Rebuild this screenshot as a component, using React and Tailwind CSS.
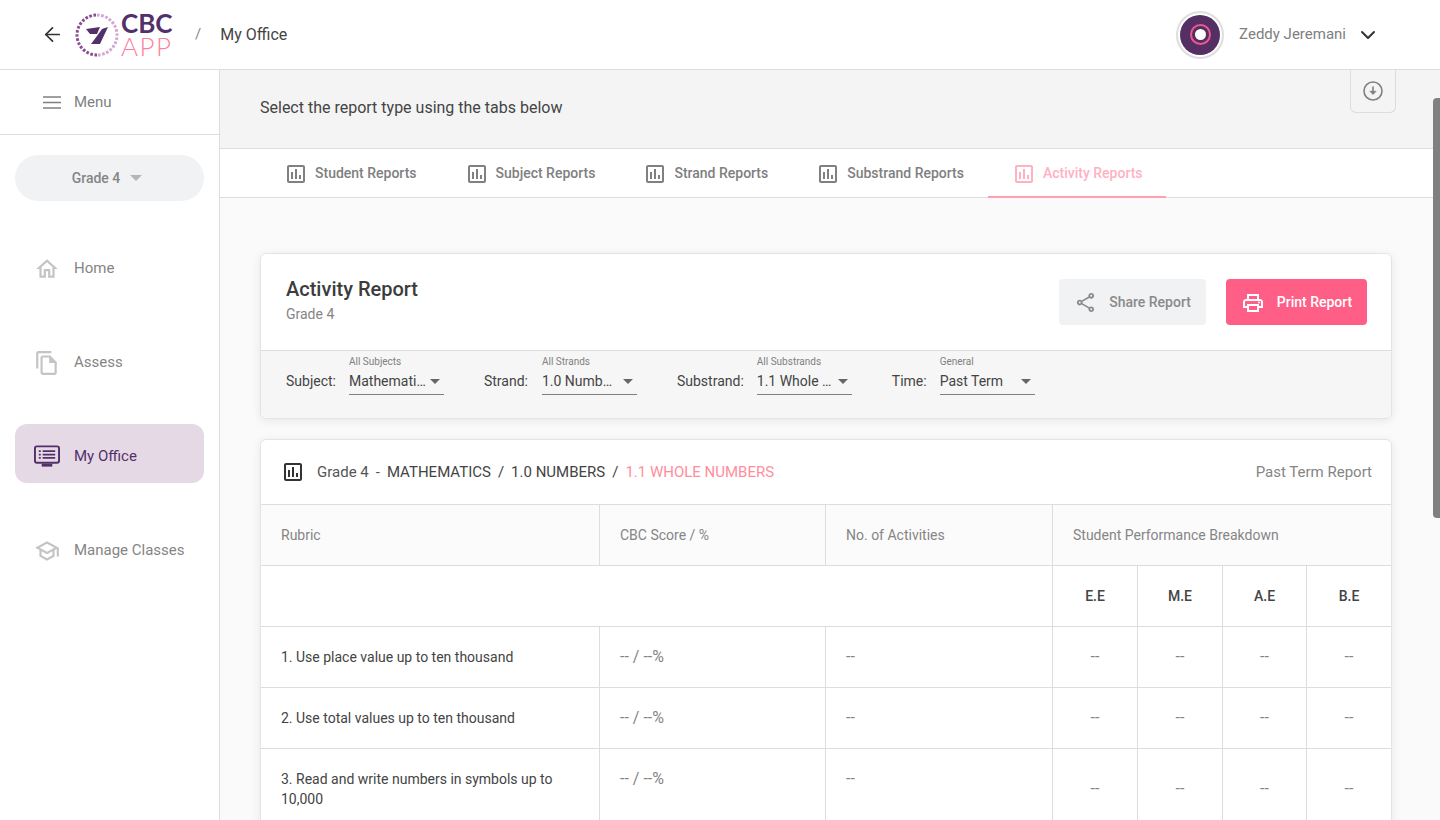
import React from 'react'
import { ArrowLeft, ChevronDown } from 'lucide-react'

const FONT = { fontFamily: 'Roboto, "Liberation Sans", sans-serif' }

const TABS = ['Student Reports', 'Subject Reports', 'Strand Reports', 'Substrand Reports', 'Activity Reports']

const FILTERS = [
  { label: 'Subject:', hint: 'All Subjects', value: 'Mathemati…', gap: 'ml-[13px]' },
  { label: 'Strand:', hint: 'All Strands', value: '1.0 Numb…', gap: 'ml-[14px]' },
  { label: 'Substrand:', hint: 'All Substrands', value: '1.1 Whole …', gap: 'ml-[13px]' },
  { label: 'Time:', hint: 'General', value: 'Past Term', gap: 'ml-[13px]' }
]

const ROWS = [
  { name: '1. Use place value up to ten thousand' },
  { name: '2. Use total values up to ten thousand' },
  { name: '3. Read and write numbers in symbols up to 10,000' }
]

const GRADES = ['E.E', 'M.E', 'A.E', 'B.E']

function MaterialIcon({ d, size = 24, className = '' }) {
  return (
    <svg width={size} height={size} viewBox="0 0 24 24" fill="currentColor" className={className}>
      <path d={d} />
    </svg>
  )
}

const ICON_CHART = 'M9 17H7v-7h2v7zm4 0h-2V7h2v10zm4 0h-2v-4h2v4zm2 2H5V5h14v14.1zM19 3H5c-1.1 0-2 .9-2 2v14c0 1.1.9 2 2 2h14c1.1 0 2-.9 2-2V5c0-1.1-.9-2-2-2z'
const ICON_HOME = 'M12 5.69l5 4.5V18h-2v-6H9v6H7v-7.81l5-4.5M12 3L2 12h3v8h6v-6h2v6h6v-8h3L12 3z'
const ICON_COPY = 'M16 1H4c-1.1 0-2 .9-2 2v14h2V3h12V1zm-1 4H8c-1.1 0-1.99.9-1.99 2L6 21c0 1.1.89 2 1.99 2H19c1.1 0 2-.9 2-2V11l-6-6zM8 21V7h6v5h5v9H8z'
const ICON_SCHOOL = 'M12 3L1 9l4 2.18v6L12 21l7-3.82v-6l2-1.09V17h2V9L12 3zm6.82 6L12 12.72 5.18 9 12 5.28 18.82 9zM17 15.99l-5 2.73-5-2.73v-3.72L12 15l5-2.73v3.72z'
const ICON_SHARE = 'M18 16.08c-.76 0-1.44.3-1.96.77L8.91 12.7c.05-.23.09-.46.09-.7s-.04-.47-.09-.7l7.05-4.11c.54.5 1.25.81 2.04.81 1.66 0 3-1.34 3-3s-1.34-3-3-3-3 1.34-3 3c0 .24.04.47.09.7L8.04 9.81C7.5 9.31 6.79 9 6 9c-1.66 0-3 1.34-3 3s1.34 3 3 3c.79 0 1.5-.31 2.04-.81l7.12 4.16c-.05.21-.08.43-.08.65 0 1.61 1.31 2.92 2.92 2.92s2.92-1.31 2.92-2.92-1.31-2.92-2.92-2.92zM18 4c.55 0 1 .45 1 1s-.45 1-1 1-1-.45-1-1 .45-1 1-1zM6 13c-.55 0-1-.45-1-1s.45-1 1-1 1 .45 1 1-.45 1-1 1zm12 7.02c-.55 0-1-.45-1-1s.45-1 1-1 1 .45 1 1-.45 1-1 1z'
const ICON_PRINT = 'M19 8h-1V3H6v5H5c-1.66 0-3 1.34-3 3v6h4v4h12v-4h4v-6c0-1.66-1.34-3-3-3zM8 5h8v3H8V5zm8 12v2H8v-4h8v2zm2-2v-2H6v2H4v-4c0-.55.45-1 1-1h14c.55 0 1 .45 1 1v4h-2z'

function Logo() {
  return (
    <div className="flex items-center">
      <svg width="44" height="44" viewBox="0 0 44 44">
        <path d="M22 2 A20 20 0 0 1 22 42" fill="none" stroke="#d3a6d3" strokeWidth="3" strokeDasharray="2.6 1.6" />
        <path d="M22 42 A20 20 0 0 1 22 2" fill="none" stroke="#8a4d8f" strokeWidth="3" strokeDasharray="2.6 1.6" />
        <path d="M11 16 L25 14 L22 21 L15 21 Z" fill="#53306a" />
        <path d="M33 14 L25 31 L16 31 L22 23 L27 16 Z" fill="#53306a" />
      </svg>
      <div className="ml-[2px] flex flex-col w-[55px]" style={{ fontFamily: 'Lato, Roboto, sans-serif' }}>
        <span className="text-[26px] leading-[23px] font-bold text-[#53306a]">CBC</span>
        <span className="text-[26px] leading-[23px] font-light text-[#ff7fa0] tracking-[1.5px]">APP</span>
      </div>
    </div>
  )
}

function Header() {
  return (
    <header className="h-[70px] shrink-0 flex items-center bg-white border-b border-[#dddddd] pl-[41px] pr-[60px]">
      <ArrowLeft className="w-[23px] h-[23px] text-[#333333] mr-[11px]" strokeWidth={1.8} />
      <Logo />
      <span className="ml-[19px] text-[15px] text-[#888888]">/</span>
      <span className="ml-[19px] text-[16px] text-[#444444]">My Office</span>
      <div className="ml-auto flex items-center">
        <div className="w-[48px] h-[48px] rounded-full border-2 border-[#dedede] flex items-center justify-center">
          <div className="w-[40px] h-[40px] rounded-full bg-[#532f63] flex items-center justify-center">
            <div className="w-[21px] h-[21px] rounded-full border-2 border-[#f0568a] flex items-center justify-center">
              <div className="w-[11px] h-[11px] rounded-full bg-white" />
            </div>
          </div>
        </div>
        <span className="ml-[15px] text-[15px] text-[#808080]">Zeddy Jeremani</span>
        <ChevronDown className="ml-[10px] w-[24px] h-[24px] text-[#333333]" strokeWidth={2} />
      </div>
    </header>
  )
}

function NavItem({ icon, label, active }) {
  return (
    <div className={`h-[59px] rounded-xl flex items-center pl-[19px] ${active ? 'bg-[#e6d9e6] -mt-[2px] mb-[2px] pt-[5px]' : 'pt-[2px]'}`}>
      <div className="w-[26px] h-[28px] flex items-center justify-center">{icon}</div>
      <span className={`ml-[14px] text-[15px] ${active ? 'text-[#53306a]' : 'text-[#858585]'}`}>{label}</span>
    </div>
  )
}

function Sidebar() {
  return (
    <aside className="w-[220px] shrink-0 bg-white border-r border-[#dddddd]">
      <div className="h-[65px] flex items-center pl-[43px] border-b border-[#dddddd]">
        <svg width="18" height="13" viewBox="0 0 18 13" stroke="#808080" strokeWidth="1.5">
          <path d="M0 1h18M0 6.5h18M0 12h18" />
        </svg>
        <span className="ml-[13px] text-[15px] text-[#808080]">Menu</span>
      </div>
      <div className="px-[15px]">
        <div className="mt-[20px] h-[46px] rounded-full bg-[#f1f2f4] flex items-center justify-center pr-[5px]">
          <span className="text-[14px] font-medium text-[#858585]">Grade 4</span>
          <span className="ml-[10px] w-0 h-0 border-l-[6px] border-r-[6px] border-t-[6px] border-l-transparent border-r-transparent border-t-[#b5b5b5]" />
        </div>
        <nav className="mt-[37px] flex flex-col gap-[35px]">
          <NavItem label="Home" icon={<MaterialIcon d={ICON_HOME} size={28} className="text-[#c4c4c4]" />} />
          <NavItem label="Assess" icon={<MaterialIcon d={ICON_COPY} size={28} className="text-[#c4c4c4]" />} />
          <NavItem
            active
            label="My Office"
            icon={
              <svg width="27" height="23" viewBox="0 0 27 23" fill="none">
                <rect x="1" y="1" width="25" height="17" rx="2" stroke="#53306a" strokeWidth="2" />
                <rect x="8" y="19" width="11" height="3" fill="#53306a" />
                <path d="M5 6h2M5 9.5h2M5 13h2M9 6h13M9 9.5h13M9 13h13" stroke="#53306a" strokeWidth="1.8" />
              </svg>
            }
          />
          <NavItem label="Manage Classes" icon={<MaterialIcon d={ICON_SCHOOL} size={28} className="text-[#c4c4c4]" />} />
        </nav>
      </div>
    </aside>
  )
}

function Tabs() {
  return (
    <div className="h-[50px] shrink-0 bg-white border-y border-[#dddddd] pl-[40px] flex">
      {TABS.map((tab, i) => {
        const active = i === TABS.length - 1
        return (
          <div
            key={tab}
            className={`h-[49px] flex items-center gap-[7px] text-[14px] font-medium ${
              active ? 'pl-[24px] pr-[23px] pt-[2px] text-[#ffb1c3] border-b-2 border-[#ff9fb0]' : 'px-[24px] text-[#808080]'
            }`}
          >
            <MaterialIcon d={ICON_CHART} />
            <span>{tab}</span>
          </div>
        )
      })}
    </div>
  )
}

function Filter({ label, hint, value, gap }) {
  return (
    <div className="flex items-center">
      <span className="text-[14px] text-[#444444] mt-[12px]">{label}</span>
      <div className={`${gap} w-[95px]`}>
        <div className="text-[10px] leading-[12px] text-[#808080]">{hint}</div>
        <div className="mt-[2px] h-[25px] pb-[2px] border-b border-[#808080] flex items-center justify-between pr-[4px]">
          <span className="text-[14px] text-[#444444]">{value}</span>
          <span className="w-0 h-0 border-l-[5px] border-r-[5px] border-t-[5px] border-l-transparent border-r-transparent border-t-[#666666]" />
        </div>
      </div>
    </div>
  )
}

function ReportCard() {
  return (
    <section className="bg-white rounded-md border border-[#e4e4e4] shadow-[0_2px_10px_rgba(0,0,0,0.08)] overflow-hidden">
      <div className="h-[97px] flex items-center justify-between pl-[25px] pr-[24px] border-b border-[#dddddd]">
        <div className="-mt-[5px]">
          <h2 className="text-[20px] leading-[26px] font-medium text-[#3c3c3c]">Activity Report</h2>
          <p className="mt-[3px] text-[14px] leading-[18px] text-[#858585]">Grade 4</p>
        </div>
        <div className="flex items-center gap-[20px] -mt-[1px]">
          <button className="w-[147px] h-[46px] pt-[2px] rounded bg-[#f1f2f4] flex items-center justify-center gap-[12px] text-[14px] font-medium text-[#8a8a8a]">
            <MaterialIcon d={ICON_SHARE} size={23} />
            Share Report
          </button>
          <button className="w-[141px] h-[46px] pt-[2px] rounded bg-[#ff5f87] flex items-center justify-center gap-[12px] text-[14px] font-medium text-white">
            <svg width="24" height="24" viewBox="0 0 24 24" fill="currentColor">
              <path d={ICON_PRINT} />
              <circle cx="18" cy="11.5" r="1" />
            </svg>
            Print Report
          </button>
        </div>
      </div>
      <div className="h-[67px] bg-[#f6f6f6] flex items-start pt-[5px] pl-[25px] gap-[40px]">
        {FILTERS.map(f => (
          <Filter key={f.label} {...f} />
        ))}
      </div>
    </section>
  )
}

function ResultsCard() {
  const cell = 'border-r border-b border-[#dddddd]'
  return (
    <section className="mt-[20px] bg-white rounded-t-md border border-[#e4e4e4] shadow-[0_2px_10px_rgba(0,0,0,0.08)]">
      <div className="h-[65px] flex items-center pl-[20px] pr-[19px] border-b border-[#dddddd] text-[15px]">
        <MaterialIcon d={ICON_CHART} className="text-[#333333]" />
        <span className="ml-[12px] text-[#555555]">Grade 4</span>
        <span className="ml-[7px] text-[#555555]">-</span>
        <span className="ml-[7px] text-[#444444]">MATHEMATICS</span>
        <span className="ml-[7px] text-[#444444]">/</span>
        <span className="ml-[7px] text-[#444444]">1.0 NUMBERS</span>
        <span className="ml-[7px] text-[#444444]">/</span>
        <span className="ml-[7px] text-[#ff8e9d]">1.1 WHOLE NUMBERS</span>
        <span className="ml-auto text-[#858585]">Past Term Report</span>
      </div>
      <table className="w-full table-fixed border-separate border-spacing-0 text-[14px]">
        <colgroup>
          <col className="w-[339px]" />
          <col className="w-[226px]" />
          <col className="w-[227px]" />
          <col className="w-[85px]" />
          <col className="w-[85px]" />
          <col className="w-[84px]" />
          <col />
        </colgroup>
        <thead>
          <tr className="h-[61px] bg-[#fbfbfb] text-[#858585] text-left">
            <th className={`${cell} px-[20px] font-normal`}>Rubric</th>
            <th className={`${cell} px-[20px] font-normal`}>CBC Score / %</th>
            <th className={`${cell} px-[20px] font-normal`}>No. of Activities</th>
            <th colSpan={4} className="border-b border-[#dddddd] px-[20px] font-normal">
              Student Performance Breakdown
            </th>
          </tr>
          <tr className="h-[61px]">
            <th colSpan={3} className={cell} />
            {GRADES.map((g, i) => (
              <th
                key={g}
                className={`${i === GRADES.length - 1 ? 'border-b border-[#dddddd]' : cell} pt-[1px] font-medium text-[14px] text-[#444444]`}
              >
                {g}
              </th>
            ))}
          </tr>
        </thead>
        <tbody>
          {ROWS.map(row => (
            <tr key={row.name}>
              <td className={`${cell} px-[20px] py-[20px] leading-[20px] text-[#444444] align-top`}>{row.name}</td>
              <td className={`${cell} px-[20px] py-[20px] leading-[20px] text-[16px] text-[#858585] align-top`}>-- / --%</td>
              <td className={`${cell} px-[20px] py-[20px] leading-[20px] text-[16px] text-[#858585] align-top`}>--</td>
              {GRADES.map((g, i) => (
                <td
                  key={g}
                  className={`${i === GRADES.length - 1 ? 'border-b border-[#dddddd]' : cell} text-center text-[16px] text-[#858585]`}
                >
                  --
                </td>
              ))}
            </tr>
          ))}
        </tbody>
      </table>
    </section>
  )
}

export default function App() {
  return (
    <div className="h-[820px] overflow-hidden flex flex-col bg-white relative" style={FONT}>
      <Header />
      <div className="flex flex-1 min-h-0">
        <Sidebar />
        <main className="flex-1 min-w-0 flex flex-col bg-[#fafafa]">
          <div className="h-[78px] shrink-0 bg-[#f4f4f4] flex items-start justify-between pl-[40px] pr-[44px]">
            <p className="mt-[27px] text-[16px] leading-[22px] text-[#444444]">Select the report type using the tabs below</p>
            <button className="w-[46px] h-[43px] rounded-b-md border border-t-0 border-[#dddddd] flex items-center justify-center text-[#808080]">
              <svg width="20" height="20" viewBox="0 0 20 20" fill="none" stroke="currentColor" strokeWidth="1.6">
                <circle cx="10" cy="10" r="9" />
                <path d="M10 5.5v7" />
                <path d="M6.8 10.2 10 13.6l3.2-3.4z" fill="currentColor" strokeWidth="0.6" />
              </svg>
            </button>
          </div>
          <Tabs />
          <div className="flex-1 min-h-0 overflow-hidden pt-[55px] pl-[40px] pr-[48px]">
            <ReportCard />
            <ResultsCard />
          </div>
        </main>
      </div>
      <div className="absolute right-0 top-[98px] w-[7px] h-[420px] rounded-l-sm bg-[#808080]" />
    </div>
  )
}
